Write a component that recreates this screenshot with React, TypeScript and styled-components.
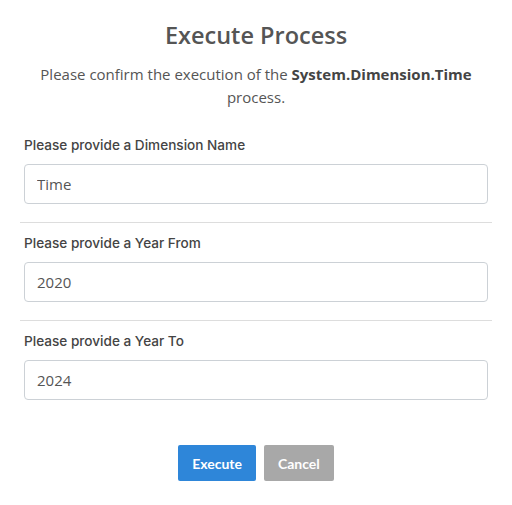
import styled, {createGlobalStyle} from "styled-components";
import {FC} from "react";

const GlobalStyle = createGlobalStyle`
  body {
    margin: 0;
    background: #fff;
    font-family: "Open Sans", sans-serif;
  }
`;

const Dialog = styled.div`
  width: 512px;
  padding: 21px 20px 0;
  box-sizing: border-box;
  display: flex;
  flex-direction: column;
`;

const Title = styled.h2`
  margin: 0;
  text-align: center;
  font-family: "Open Sans", sans-serif;
  font-weight: 600;
  font-size: 23.5px;
  line-height: 28px;
  color: #555;
`;

const Message = styled.p`
  margin: 14px 0 0;
  text-align: center;
  font-size: 15px;
  line-height: 23px;
  color: #555;

  b {
    color: #444;
    font-weight: 700;
  }
`;

const Form = styled.div`
  margin-top: 27px;
  display: flex;
  flex-direction: column;
`;

const Field = styled.div<{ $last?: boolean }>`
  display: flex;
  flex-direction: column;
  gap: 10px;
  padding: 0 4px ${p => (p.$last ? "0" : "18px")};
  margin-bottom: ${p => (p.$last ? "0" : "11px")};
  border-bottom: ${p => (p.$last ? "none" : "1px solid #ddd")};
`;

const Label = styled.label`
  font-family: Inter, sans-serif;
  font-size: 13.6px;
  font-weight: 500;
  line-height: 18px;
  color: #444;
`;

const Input = styled.input`
  height: 40px;
  box-sizing: border-box;
  border: 1px solid #ccd1d6;
  border-radius: 4px;
  padding: 0 12px;
  font-family: "Open Sans", sans-serif;
  font-size: 15px;
  color: #555;
  outline: none;
`;

const Actions = styled.div`
  margin-top: 45px;
  display: flex;
  justify-content: center;
  gap: 8px;
`;

const Button = styled.button<{ $variant: "primary" | "muted" }>`
  height: 36px;
  padding: 0 14px;
  border: none;
  border-radius: 2px;
  font-family: Lato, sans-serif;
  font-weight: 700;
  font-size: 14px;
  color: #fff;
  background: ${p => (p.$variant === "primary" ? "#2e86d9" : "#a8a8a8")};
`;

const fields = [
    {label: "Please provide a Dimension Name", value: "Time"},
    {label: "Please provide a Year From", value: "2020"},
    {label: "Please provide a Year To", value: "2024"},
];

const App: FC = () => {
    return (
        <>
            <GlobalStyle/>
            <Dialog>
                <Title>Execute Process</Title>
                <Message>
                    Please confirm the execution of the <b>System.Dimension.Time</b> process.
                </Message>
                <Form>
                    {fields.map((f, i) => (
                        <Field key={f.label} $last={i === fields.length - 1}>
                            <Label>{f.label}</Label>
                            <Input defaultValue={f.value}/>
                        </Field>
                    ))}
                </Form>
                <Actions>
                    <Button $variant="primary">Execute</Button>
                    <Button $variant="muted">Cancel</Button>
                </Actions>
            </Dialog>
        </>
    );
};

export default App;
